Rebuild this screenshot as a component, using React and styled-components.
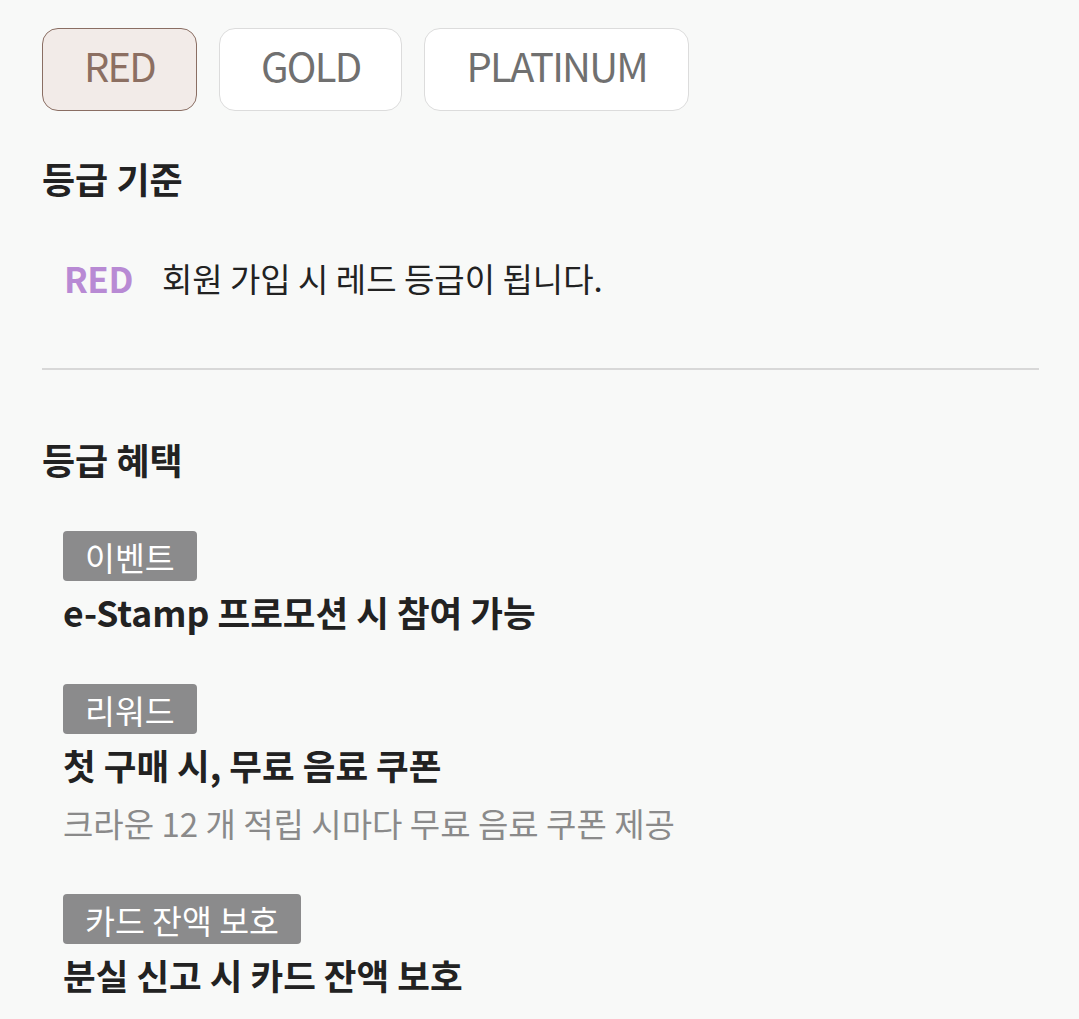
import React, { useState } from "react";
import styled, { createGlobalStyle } from "styled-components";

const GlobalStyle = createGlobalStyle`
  body {
    margin: 0;
    background: #f8f9f8;
    font-family: "Noto Sans CJK KR", "Noto Sans", sans-serif;
    color: #222;
  }
`;

const Page = styled.div`
  padding: 28px 40px 0 42px;
`;

const TabRow = styled.div`
  display: flex;
  gap: 22px;
`;

const Tab = styled.button`
  height: 83px;
  padding: 0 41px 9px;
  display: flex;
  align-items: center;
  justify-content: center;
  font-family: inherit;
  font-size: 40px;
  letter-spacing: -1.8px;
  border-radius: 16px;
  border: 1px solid ${(p) => (p.$active ? "#8a6e63" : "#dcdcdc")};
  background: ${(p) => (p.$active ? "#f2ebe8" : "#ffffff")};
  color: ${(p) => (p.$active ? "#8c6f62" : "#707070")};
  cursor: pointer;
`;

const SectionTitle = styled.h2`
  margin: ${(p) => p.$top || "0"} 0 0;
  font-size: 36px;
  font-weight: 700;
  line-height: 46px;
  color: #222;
`;

const CriteriaRow = styled.div`
  display: flex;
  align-items: center;
  gap: 29px;
  margin: 56px 0 0 22px;
  font-size: 33px;
  line-height: 42px;
  color: #222;
`;

const GradeName = styled.span`
  font-size: 35px;
  font-weight: 700;
  letter-spacing: -0.5px;
  color: #b88ad4;
`;

const Divider = styled.hr`
  margin: 69px 0 0;
  border: 0;
  border-top: 2px solid #d8d8d8;
`;

const BenefitList = styled.div`
  display: flex;
  flex-direction: column;
  gap: 50px;
  margin: 49px 0 0 21px;
`;

const Benefit = styled.div`
  display: flex;
  flex-direction: column;
  align-items: flex-start;
`;

const Tag = styled.span`
  height: 50px;
  padding: 0 22px;
  display: flex;
  align-items: center;
  background: #8b8b8c;
  border-radius: 4px;
  color: #fff;
  font-size: 32.5px;
`;

const BenefitTitle = styled.div`
  margin-top: 8px;
  font-size: 35.5px;
  font-weight: 700;
  line-height: 45px;
  color: #222;
`;

const BenefitDesc = styled.div`
  margin-top: 15px;
  font-size: 33px;
  line-height: 42px;
  color: #8a8a8a;
`;

const grades = ["RED", "GOLD", "PLATINUM"];

const benefits = [
  { tag: "이벤트", title: "e-Stamp 프로모션 시 참여 가능" },
  {
    tag: "리워드",
    title: "첫 구매 시, 무료 음료 쿠폰",
    desc: "크라운 12 개 적립 시마다 무료 음료 쿠폰 제공",
  },
  { tag: "카드 잔액 보호", title: "분실 신고 시 카드 잔액 보호" },
];

export default function App() {
  const [active, setActive] = useState("RED");

  return (
    <Page>
      <GlobalStyle />
      <TabRow>
        {grades.map((g) => (
          <Tab key={g} $active={active === g} onClick={() => setActive(g)}>
            {g}
          </Tab>
        ))}
      </TabRow>

      <SectionTitle $top="44px">등급 기준</SectionTitle>
      <CriteriaRow>
        <GradeName>RED</GradeName>
        <span>회원 가입 시 레드 등급이 됩니다.</span>
      </CriteriaRow>

      <Divider />

      <SectionTitle $top="66px">등급 혜택</SectionTitle>
      <BenefitList>
        {benefits.map((b) => (
          <Benefit key={b.tag}>
            <Tag>{b.tag}</Tag>
            <BenefitTitle>{b.title}</BenefitTitle>
            {b.desc && <BenefitDesc>{b.desc}</BenefitDesc>}
          </Benefit>
        ))}
      </BenefitList>
    </Page>
  );
}
